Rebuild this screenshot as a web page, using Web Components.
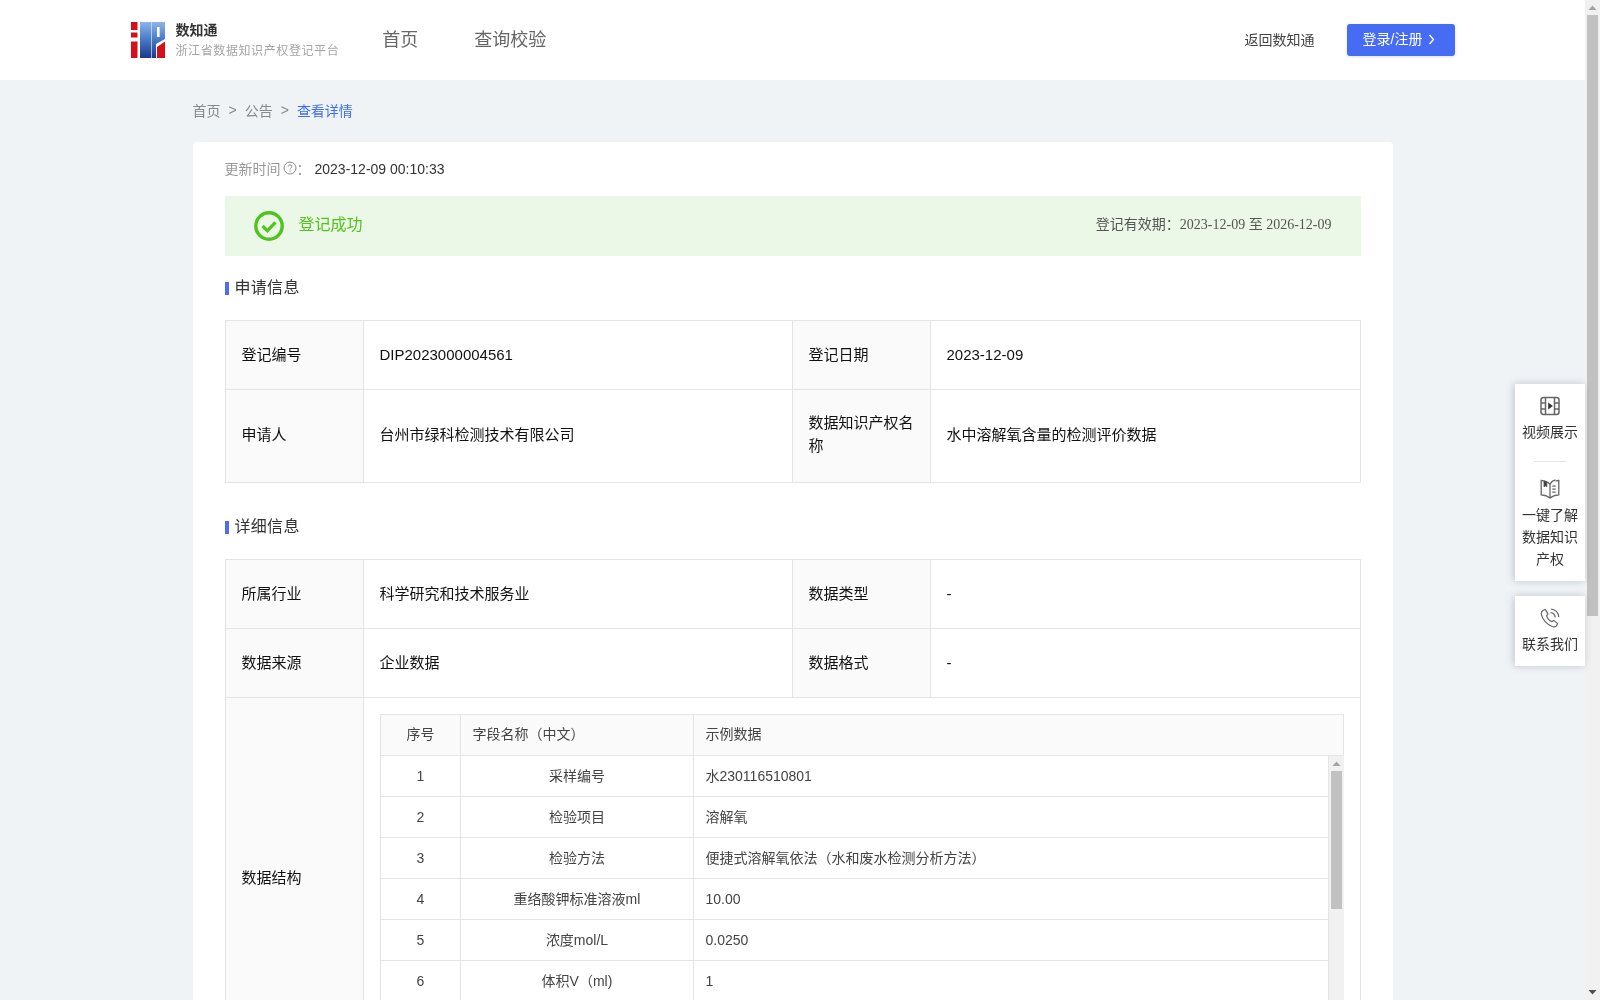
<!DOCTYPE html>
<html lang="zh-CN">
<head>
<meta charset="utf-8">
<title>查看详情</title>
<style>
html{background:#eff3f6;overflow:hidden}
body{margin:0;height:1000px;overflow:hidden;display:flex;font-family:"Liberation Sans","Noto Sans CJK SC",sans-serif;font-size:14px;color:#333;background:#eff3f6}
</style>
</head>
<body>
<page-main>
<site-header>
  <span slot="title">数知通</span>
  <span slot="sub">浙江省数据知识产权登记平台</span>
</site-header>
  <bread-crumb current="查看详情" items="首页,公告"></bread-crumb>
  <detail-card>
    <update-time value="2023-12-09 00:10:33"></update-time>
    <status-banner validity="登记有效期&#xFF1A;2023-12-09 至 2026-12-09">登记成功</status-banner>
    <section-title>申请信息</section-title>
    <info-table rows='[[69,"登记编号","DIP2023000004561","登记日期","2023-12-09"],[93,"申请人","台州市绿科检测技术有限公司","数据知识产权名称","水中溶解氧含量的检测评价数据"]]'></info-table>
    <section-title second>详细信息</section-title>
    <info-table rows='[[69,"所属行业","科学研究和技术服务业","数据类型","-"],[69,"数据来源","企业数据","数据格式","-"]]' span-label="数据结构">
      <data-table slot="span"></data-table>
    </info-table>
  </detail-card>
</page-main>
<v-scrollbar thumb="601"></v-scrollbar>
<side-dock></side-dock>

<script>
function def(name, css, html){
  customElements.define(name, class extends HTMLElement{
    constructor(){super();this.attachShadow({mode:'open'});}
    connectedCallback(){
      const t=document.createElement('template');
      t.innerHTML='<style>'+css+'</style>'+(typeof html==='function'?html(this):html);
      this.shadowRoot.replaceChildren(t.content);
    }
  });
}

def('v-scrollbar',`
:host{display:flex;flex:none;flex-direction:column;width:15px;background:#f1f1f1}
svg{display:block;flex:none}
.t{flex:none;background:#c1c1c1;margin:0 2px}
.s{flex:1}
`,h=>`<svg width="15" height="15" viewBox="0 0 15 15"><path d="M3.5 10h8L7.5 5.5z" fill="#a3a3a3"/></svg><div class="t" style="height:${h.getAttribute('thumb')}px"></div><div class="s"></div><svg width="15" height="15" viewBox="0 0 15 15"><path d="M3.5 5h8L7.5 9.5z" fill="#505050"/></svg>`);

def('site-header',`
:host{display:block;height:80px;background:#fff}
.in{width:1324px;height:80px;margin:0 auto;display:flex;align-items:center}
.logo{display:block;width:34px;height:36px}
.brand{margin-left:11px;display:flex;flex-direction:column}
.t{font-size:14px;line-height:20px;color:#333;font-weight:700}
.s{font-size:12px;line-height:20px;color:#a6a6a6;letter-spacing:.6px;padding-top:1px}
nav{display:flex;gap:56px;margin-left:43px}
nav a{font-size:18px;line-height:26px;color:#666}
.r{margin-left:auto;display:flex;align-items:center;gap:32px}
.back{font-size:14px;color:#444;padding-bottom:2px}
.btn{width:108px;height:32px;box-sizing:border-box;background:#456cf3;color:#fff;border-radius:3px;box-shadow:0 1px 3px rgba(69,108,243,.2);display:flex;align-items:center;justify-content:center;gap:6px;font-size:14px;padding:0 3px 4px 0}
.btn svg{margin-top:3px}
`,`<div class="in">
<svg class="logo" viewBox="0 0 34 36">
<defs><linearGradient id="g" x1="0" y1="0" x2="0" y2="1"><stop offset="0" stop-color="#8db4ea"/><stop offset=".45" stop-color="#4c7fc8"/><stop offset="1" stop-color="#1b3a88"/></linearGradient></defs>
<g fill="#d5101a"><rect x="0" y="0" width="6.5" height="8"/><rect x="0" y="10.5" width="6.5" height="5"/><rect x="0" y="19.5" width="6.5" height="16.5"/></g>
<path d="M9 0H34V17L25 22V36H9z" fill="url(#g)"/>
<rect x="20" y="0" width=".8" height="36" fill="#e4eefa" opacity=".8"/>
<rect x="26" y="5" width="2.6" height="10" fill="#fff"/>
<path d="M26 25L34 19.5V36H26z" fill="#d5101a"/>
</svg>
<div class="brand"><span class="t"><slot name="title"></slot></span><span class="s"><slot name="sub"></slot></span></div>
<nav><a>首页</a><a>查询校验</a></nav>
<div class="r"><span class="back">返回数知通</span><span class="btn">登录/注册<svg width="7" height="11" viewBox="0 0 7 11"><path d="M1.5 1l4 4.5-4 4.5" fill="none" stroke="#fff" stroke-width="1.4"/></svg></span></div>
</div>`);

def('page-main',`:host{display:block;flex:1;min-width:0;height:1000px;overflow:hidden;will-change:opacity}`,`<slot></slot>`);

def('bread-crumb',`
:host{display:flex;width:1200px;margin:0 auto;height:60px;padding-bottom:2px;align-items:center;font-size:14px;color:#888}
.sep{margin:0 8px;font-size:14px;color:#888}
.cur{color:#3e6ff5}
`,h=>h.getAttribute('items').split(',').map(x=>`<span>${x}</span><span class="sep">&gt;</span>`).join('')+`<span class="cur">${h.getAttribute('current')}</span>`);

def('detail-card',`
:host{display:block;box-sizing:border-box;width:1200px;margin:0 auto;background:#fff;border-radius:4px;padding:15px 32px 40px}
`,`<slot></slot>`);

def('update-time',`
:host{display:flex;align-items:center;height:22px;margin-bottom:17px;color:#999;font-size:14px}
svg{margin:0 0 0 2px}
.v{color:#333;margin-left:4px;padding-top:1px}
`,h=>`更新时间<svg width="14" height="14" viewBox="0 0 14 14"><circle cx="7" cy="7" r="6" fill="none" stroke="#888"/><path d="M5.2 5.6C5.2 3.4 8.9 3.4 8.9 5.5 8.9 6.9 7 6.9 7 8.4" fill="none" stroke="#888"/><rect x="6.5" y="9.5" width="1" height="1.2" fill="#888"/></svg><span>&#xFF1A;</span><span class="v">${h.getAttribute('value')}</span>`);

def('status-banner',`
:host{display:flex;align-items:center;height:60px;background:#ebf7e7;padding:0 29px 0 29px}
svg{display:block;margin-right:15px}
.t{font-size:16px;color:#52c41a;padding-bottom:6px}
.v{margin-left:auto;font-family:"Liberation Serif","Noto Sans CJK SC",serif;font-size:14px;color:#555;padding-bottom:6px}
`,h=>`<svg width="30" height="30" viewBox="0 0 30 30"><circle cx="15" cy="15" r="13.2" fill="none" stroke="#4fc41c" stroke-width="3.4"/><path d="M8.6 15l4.8 4.8 8-8.4" fill="none" stroke="#4fc41c" stroke-width="3.2"/></svg><span class="t"><slot></slot></span><span class="v">${h.getAttribute('validity')}</span>`);

def('section-title',`
:host{display:flex;align-items:center;height:22px;margin:19px 0 23px;font-size:16px;color:#333;letter-spacing:.3px}
:host([second]){margin-top:31px}
i{display:block;width:4px;height:13px;background:#4a6ff2;margin:5px 6px 0 0}
`,`<i></i><slot></slot>`);

def('info-table',`
:host{display:block}
table{table-layout:fixed;border-collapse:collapse;width:1135px;font-size:15px;line-height:23px;color:#111}
td{border:1px solid #e4e4e4;padding:0 16px 2px;box-sizing:border-box}
.tall td{padding-bottom:4px}
.l{background:#fafafa}
.slotcell{padding:16px}
`,h=>{
  const rows=JSON.parse(h.getAttribute('rows'));
  let s='<table><colgroup><col width="138"><col width="429"><col width="138"><col width="430"></colgroup>';
  for(const r of rows){s+=`<tr class="${r[0]>69?'tall':''}" style="height:${r[0]}px"><td class="l">${r[1]}</td><td>${r[2]}</td><td class="l">${r[3]}</td><td>${r[4]}</td></tr>`;}
  const sl=h.getAttribute('span-label');
  if(sl)s+=`<tr><td class="l">${sl}</td><td colspan="3" class="slotcell"><slot name="span"></slot></td></tr>`;
  return s+'</table>';
});

def('data-table',`
:host{display:block;width:964px;font-size:14px;color:#444}
table{table-layout:fixed;border-collapse:separate;border-spacing:0;border-left:1px solid #e4e4e4}
td,th{box-sizing:border-box;height:41px;border-right:1px solid #e4e4e4;border-bottom:1px solid #e4e4e4;padding:1px 11px 0 12px;font-weight:400;text-align:left}
.head{width:964px;border-top:1px solid #e4e4e4}
.head th{background:#fafafa;height:41px;padding-top:0;padding-bottom:1px}
.c{text-align:center}
.body{display:flex;width:964px;height:286px;overflow:hidden}
.scroll{flex:none;width:949px;overflow:hidden}
.scroll table{width:949px}
`,()=>{
  const d=[['采样编号','水230116510801'],['检验项目','溶解氧'],['检验方法','便捷式溶解氧依法\uFF08水和废水检测分析方法\uFF09'],['重络酸钾标准溶液ml','10.00'],['浓度mol/L','0.0250'],['体积V\uFF08ml)','1']];
  const cols='<colgroup><col style="width:80px"><col style="width:233px"><col></colgroup>';
  let s=`<table class="head">${cols}<tr><th class="c">序号</th><th>字段名称\uFF08中文\uFF09</th><th>示例数据</th></tr></table><div class="body"><div class="scroll"><table>${cols}`;
  d.forEach((r,i)=>{s+=`<tr><td class="c">${i+1}</td><td class="c">${r[0]}</td><td>${r[1]}</td></tr>`;});
  return s+'</table></div><v-scrollbar thumb="138"></v-scrollbar></div>';
});

def('dock-item',`
:host{display:flex;flex-direction:column;align-items:center}
.l{margin:5px 0 1px;width:56px;text-align:center;font-size:14px;line-height:22px;color:#333}
`,`<slot name="icon"></slot><div class="l"><slot></slot></div>`);

def('side-dock',`
:host{position:fixed;right:15px;top:384px;width:70px;display:flex;flex-direction:column;gap:15px;z-index:5}
.p{background:#fff;box-shadow:-2px 0 8px rgba(60,70,90,.16),0 0 8px rgba(60,70,90,.10);padding:12px 0 10px;display:flex;flex-direction:column;align-items:center}
hr{width:32px;height:1px;border:0;background:#e4e4e4;margin:17px 0}
svg{display:block}
`,`<div class="p">
<dock-item><svg slot="icon" width="20" height="20" viewBox="0 0 20 20" fill="none" stroke="#666" stroke-width="1.5"><rect x="1" y="1.5" width="18" height="17" rx="2.5"/><path d="M5.5 1.5v17M14.5 1.5v17M1 7h4.5M1 13h4.5M14.5 7H19M14.5 13H19"/><path d="M8.2 6.5l4.6 3.5-4.6 3.5z" fill="#333" stroke="none"/></svg>视频展示</dock-item>
<hr>
<dock-item><svg slot="icon" width="20" height="20" viewBox="0 0 20 20" fill="none" stroke="#666" stroke-width="1.3"><path d="M10 5.2C8 3 5 1.8 1.2 1.4V15.8C5 16 8 17.2 10 19 12 17.2 15 16 18.8 15.8V1.4C17.6 1.5 16.5 1.8 15.5 2.1"/><path d="M15.5 .9C13 1.5 11 3 10 5.2V19"/><path d="M4 1.8v6l1.4-1 1.4 1V3" fill="#444" stroke="#444" stroke-width=".8"/><path d="M12.3 7.2h3.4M12.3 10.2h3.4M12.3 13.2h3.4"/></svg>一键了解数据知识产权</dock-item>
</div>
<div class="p">
<dock-item><svg slot="icon" width="20" height="20" viewBox="0 0 20 20" fill="none" stroke="#666" stroke-width="1.2"><path d="M3.2 2.2L5.4 1.4 8 6 6.6 7.6C7.2 10 9.6 12.8 12 13.6L13.8 12.4 17.6 15.6 16.4 17.8C15.4 19 13.6 19 11.6 18.2 6.6 16.2 2.4 11.2 1.4 6.6 1 4.8 1.8 3 3.2 2.2z"/><path d="M10.5 4.6C13.2 4.8 15 6.8 15.2 9.4"/><path d="M10.8 1C15.2 1.2 18.6 4.6 18.8 9"/></svg>联系我们</dock-item>
</div>`);
</script>
</body>
</html>
